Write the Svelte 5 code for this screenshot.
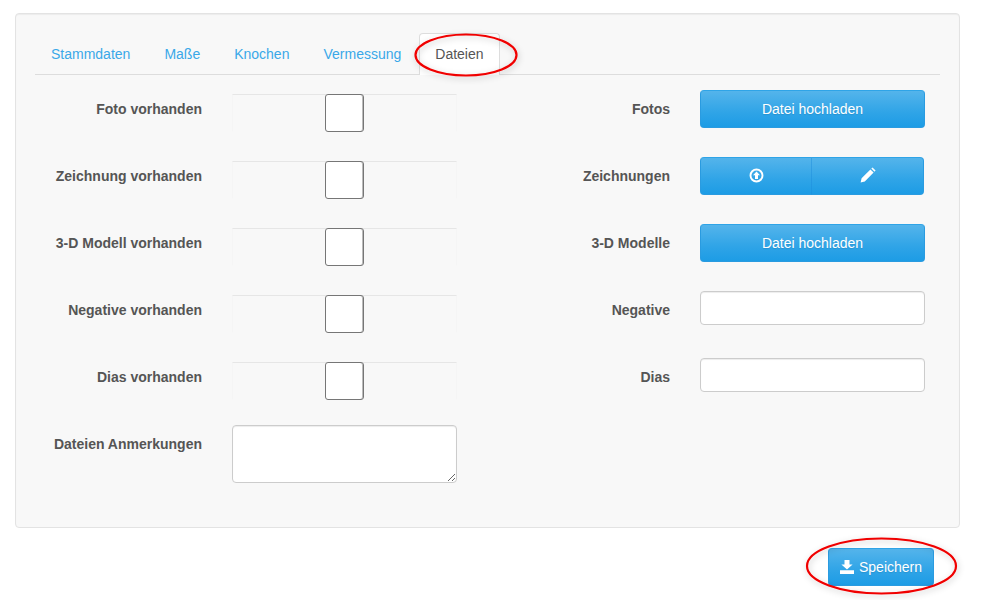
<script>
  const tabs = ['Stammdaten', 'Maße', 'Knochen', 'Vermessung', 'Dateien'];
  const flags = ['Foto vorhanden', 'Zeichnung vorhanden', '3-D Modell vorhanden', 'Negative vorhanden', 'Dias vorhanden'];
</script>

<div class="page">
  <div class="well">
    <ul class="tabs">
      {#each tabs as tab}
        <li class:active={tab === 'Dateien'}>{tab}</li>
      {/each}
    </ul>

    <div class="form">
      <div class="col-left">
        {#each flags as flag}
          <div class="row">
            <span class="label">{flag}</span>
            <div class="check-field"><input type="checkbox" /></div>
          </div>
        {/each}
        <div class="row last">
          <span class="label">Dateien Anmerkungen</span>
          <textarea></textarea>
        </div>
      </div>

      <div class="col-right">
        <div class="row">
          <span class="label">Fotos</span>
          <button class="btn wide">Datei hochladen</button>
        </div>
        <div class="row">
          <span class="label">Zeichnungen</span>
          <div class="btn-group">
            <button class="btn" aria-label="Hochladen">
              <svg class="lift" width="15" height="15" viewBox="0 0 15 15">
                <circle cx="7.5" cy="7.5" r="6" fill="none" stroke="#fff" stroke-width="1.9" />
                <path d="M7.5 3.4 11 7.2H9V11H6V7.2H4Z" fill="#fff" />
              </svg>
            </button>
            <button class="btn" aria-label="Zeichnen">
              <svg class="lift" width="16" height="16" viewBox="0 0 16 16">
                <path d="M.6 15.4 1.6 11.2 10.4 2.4 13.6 5.6 4.8 14.4Z M11.3 1.5 12.5 .4 15.6 3.5 14.5 4.7Z" fill="#fff" />
              </svg>
            </button>
          </div>
        </div>
        <div class="row">
          <span class="label">3-D Modelle</span>
          <button class="btn wide">Datei hochladen</button>
        </div>
        <div class="row short">
          <span class="label">Negative</span>
          <input class="text" type="text" />
        </div>
        <div class="row short">
          <span class="label">Dias</span>
          <input class="text" type="text" />
        </div>
      </div>
    </div>
  </div>

  <div class="actions">
    <button class="btn save">
      <svg width="14" height="14" viewBox="0 0 14 14">
        <path d="M4.5 0H9.5V4.5H12.6L7 9.4 1.4 4.5H4.5Z M0 10.2H14V14H0Z" fill="#fff" />
      </svg>
      Speichern
    </button>
  </div>

  <svg class="marks" width="1001" height="600">
    <defs>
      <filter id="soft" x="-20%" y="-40%" width="140%" height="180%">
        <feDropShadow dx="1" dy="2" stdDeviation="3" flood-color="#000" flood-opacity="0.22" />
      </filter>
    </defs>
    <ellipse cx="466" cy="55" rx="50.5" ry="20.5" filter="url(#soft)" />
    <ellipse cx="881.5" cy="566" rx="74.5" ry="27.5" filter="url(#soft)" />
  </svg>
</div>

<style>
  :global(body) {
    background: #fff;
  }

  .page {
    position: relative;
    width: 1001px;
    height: 600px;
    padding: 13px 41px 0 15px;
    box-sizing: border-box;
    overflow: hidden;
    font-family: "Liberation Sans", Arial, sans-serif;
    font-size: 14px;
    line-height: 20px;
    color: #555;
  }

  .well {
    box-sizing: border-box;
    height: 515px;
    padding: 19px;
    background: #f8f8f8;
    border: 1px solid #e3e3e3;
    border-radius: 4px;
    box-shadow: inset 0 1px 1px rgba(0, 0, 0, 0.05);
  }

  .tabs {
    display: flex;
    gap: 2px;
    height: 41px;
    margin: 0;
    padding: 0;
    list-style: none;
    border-bottom: 1px solid #ddd;
  }

  .tabs li {
    height: 20px;
    padding: 10px 15px 11px;
    border: 1px solid transparent;
    border-bottom: 0;
    border-radius: 4px 4px 0 0;
    color: #3aa8e8;
  }

  .tabs li.active {
    position: relative;
    height: 21px;
    padding-bottom: 10px;
    background: #fff;
    border-color: #ddd;
    color: #555;
  }

  .form {
    display: flex;
  }

  .col-left {
    padding-top: 19px;
  }

  .col-right {
    margin-left: 25px;
    padding-top: 15px;
  }

  .row {
    display: flex;
    gap: 30px;
    height: 38px;
    margin-bottom: 29px;
  }

  .row.short {
    height: 34px;
    margin-bottom: 33px;
  }

  .row.last {
    height: 58px;
    margin: -4px 0 0;
  }

  .label {
    box-sizing: border-box;
    width: 167px;
    padding-top: 5px;
    text-align: right;
    font-weight: 700;
  }

  .row.last .label {
    padding-top: 9px;
  }

  .col-right .label {
    width: 188px;
    padding-top: 9px;
  }

  .check-field {
    box-sizing: border-box;
    display: flex;
    justify-content: center;
    width: 225px;
    height: 38px;
    border: 1px solid #f5f5f5;
    border-top-color: #e6e6e6;
    border-bottom-color: #f8f8f8;
  }

  .check-field input {
    appearance: none;
    box-sizing: border-box;
    width: 39px;
    height: 38px;
    margin: -1px 0 0;
    background: #fff;
    border: 1px solid #767676;
    border-radius: 3px;
    box-shadow: inset -1px 0 0 #bbb;
  }

  textarea,
  .text {
    box-sizing: border-box;
    width: 225px;
    margin: 0;
    background: #fff;
    border: 1px solid #ccc;
    border-radius: 4px;
    box-shadow: inset 0 1px 1px rgba(0, 0, 0, 0.075);
  }

  textarea {
    display: block;
    height: 58px;
  }

  .text {
    height: 34px;
  }

  .btn {
    display: flex;
    align-items: center;
    justify-content: center;
    box-sizing: border-box;
    height: 38px;
    margin: 0;
    padding: 0;
    font: inherit;
    color: #fff;
    text-shadow: 0 1px 1px rgba(0, 0, 0, 0.1);
    background: linear-gradient(#54b4eb, #2fa4e7 60%, #1d9ce5);
    border: 1px solid #2a9be0;
    border-top-color: #2fa4e7;
    border-radius: 4px;
  }

  .btn.wide {
    width: 225px;
  }

  .btn-group {
    display: flex;
    width: 224px;
  }

  .btn-group .btn {
    width: 112px;
    border-radius: 4px 0 0 4px;
  }

  .btn-group .btn + .btn {
    margin-left: -1px;
    width: 113px;
    border-left-color: rgba(29, 140, 220, 0.45);
    border-radius: 0 4px 4px 0;
  }

  .lift {
    margin-top: -2px;
  }

  .actions {
    display: flex;
    justify-content: flex-end;
    padding: 20px 26px 0 0;
  }

  .btn.save {
    gap: 5px;
    width: 106px;
  }

  .marks {
    position: absolute;
    top: 0;
    left: 0;
    pointer-events: none;
  }

  .marks ellipse {
    fill: none;
    stroke: #f00000;
    stroke-width: 2.2;
  }
</style>
